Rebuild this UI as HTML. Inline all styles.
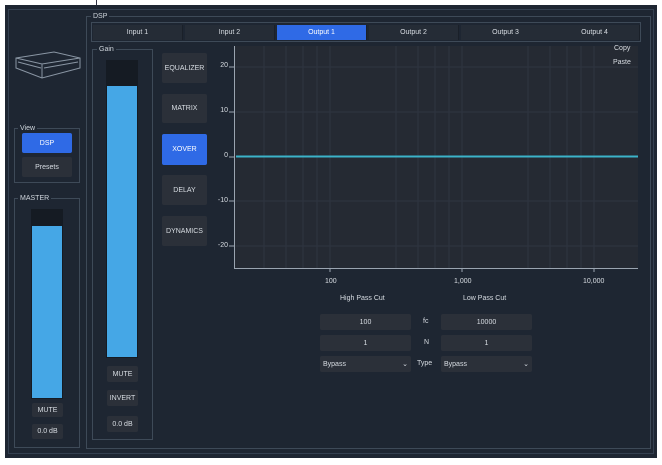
<!DOCTYPE html><html><head><style>
*{margin:0;padding:0;box-sizing:border-box}
body{width:662px;height:465px;background:#fff;position:relative;overflow:hidden;font-family:"Liberation Sans",sans-serif;font-size:8px;color:#d8dde3}
.a{position:absolute}
.box{position:absolute;border:1px solid #3e4a58}
.lbl{position:absolute;background:#1e2632;padding:0 2px;font-size:7px;color:#cfd5dc;top:-5px;left:6px;line-height:9px}
.btn{position:absolute;background:#2b3039;display:flex;align-items:center;justify-content:center;font-size:7px;color:#d8dde3;border-radius:2px}
.blue{background:#2f6ae6;color:#fff}
.tab{position:absolute;top:25px;height:15px;width:90px;background:#252c36;display:flex;align-items:center;justify-content:center;font-size:7px;border-right:1px solid #1a2029}
.tab.blue{background:#2f6ae6;color:#fff}
.yl{position:absolute;left:210px;width:18px;text-align:right;font-size:7px}
.xl{position:absolute;top:278px;font-size:7px}
</style></head><body>
<div class="a" style="left:5px;top:5px;width:652px;height:453px;background:#1e2632"></div>
<div class="a" style="left:96px;top:0;width:1px;height:5px;background:#334"></div>
<div class="box" style="left:8px;top:9px;width:646px;height:445px;border-color:#344050"></div>
<div class="box" style="left:86px;top:16px;width:565px;height:433px"><span class="lbl" style="left:4px">DSP</span></div>
<div class="box" style="left:91px;top:22px;width:550px;height:20px"></div>
<div class="tab" style="left:93px">Input 1</div>
<div class="tab" style="left:185px">Input 2</div>
<div class="tab blue" style="left:277px">Output 1</div>
<div class="tab" style="left:369px">Output 2</div>
<div class="tab" style="left:461px">Output 3</div>
<div class="tab" style="left:550px">Output 4</div>
<svg class="a" style="left:14px;top:48px" width="68" height="34"><g fill="none" stroke="#8a96a4" stroke-width="1"><path d="M2 10 L40 4 L66 10 L66 20 L28 30 L2 20 Z"/><path d="M2 10 L28 16 L66 10 M28 16 L28 30"/><path d="M4 14 L27 20 M30 20 L64 14"/></g></svg>
<div class="box" style="left:14px;top:128px;width:66px;height:55px"><span class="lbl" style="left:3px">View</span></div>
<div class="btn blue" style="left:22px;top:133px;width:50px;height:20px">DSP</div>
<div class="btn" style="left:22px;top:157px;width:50px;height:20px">Presets</div>
<div class="box" style="left:14px;top:198px;width:66px;height:250px"><span class="lbl" style="left:3px">MASTER</span></div>
<div class="a" style="left:31px;top:209px;width:32px;height:190px;background:#151b23"></div>
<div class="a" style="left:32px;top:226px;width:30px;height:172px;background:#45a7e6"></div>
<div class="btn" style="left:32px;top:403px;width:31px;height:14px">MUTE</div>
<div class="btn" style="left:32px;top:424px;width:31px;height:15px">0.0 dB</div>
<div class="box" style="left:92px;top:49px;width:61px;height:391px"><span class="lbl" style="left:4px">Gain</span></div>
<div class="a" style="left:106px;top:60px;width:32px;height:298px;background:#151b23"></div>
<div class="a" style="left:107px;top:86px;width:30px;height:271px;background:#45a7e6"></div>
<div class="btn" style="left:107px;top:366px;width:31px;height:16px">MUTE</div>
<div class="btn" style="left:107px;top:390px;width:31px;height:16px">INVERT</div>
<div class="btn" style="left:107px;top:416px;width:31px;height:16px">0.0 dB</div>
<div class="btn" style="left:162px;top:53px;width:45px;height:30px">EQUALIZER</div>
<div class="btn" style="left:162px;top:94px;width:45px;height:29px">MATRIX</div>
<div class="btn blue" style="left:162px;top:134px;width:45px;height:31px">XOVER</div>
<div class="btn" style="left:162px;top:175px;width:45px;height:30px">DELAY</div>
<div class="btn" style="left:162px;top:216px;width:45px;height:30px">DYNAMICS</div>
<svg class="a" style="left:228px;top:46px" width="412" height="226">
<rect x="7" y="0" width="403" height="222" fill="#252a33"/>
<g stroke="#2f3540" stroke-width="1">
<line x1="7.5" y1="21" x2="410" y2="21"/><line x1="7.5" y1="66" x2="410" y2="66"/><line x1="7.5" y1="155" x2="410" y2="155"/><line x1="7.5" y1="200" x2="410" y2="200"/>
<line x1="36" y1="0" x2="36" y2="222"/><line x1="58" y1="0" x2="58" y2="222"/><line x1="75" y1="0" x2="75" y2="222"/><line x1="89" y1="0" x2="89" y2="222"/><line x1="102" y1="0" x2="102" y2="222"/>
<line x1="168" y1="0" x2="168" y2="222"/><line x1="190" y1="0" x2="190" y2="222"/><line x1="207" y1="0" x2="207" y2="222"/><line x1="221" y1="0" x2="221" y2="222"/><line x1="234" y1="0" x2="234" y2="222"/>
<line x1="300" y1="0" x2="300" y2="222"/><line x1="322" y1="0" x2="322" y2="222"/><line x1="339" y1="0" x2="339" y2="222"/><line x1="353" y1="0" x2="353" y2="222"/><line x1="366" y1="0" x2="366" y2="222"/>
</g>
<g stroke="#9aa4b0" stroke-width="1"><line x1="6.5" y1="0" x2="6.5" y2="222"/><line x1="6" y1="222.5" x2="410" y2="222.5"/>
<line x1="1" y1="21" x2="6" y2="21"/><line x1="1" y1="66" x2="6" y2="66"/><line x1="1" y1="111" x2="6" y2="111"/><line x1="1" y1="155" x2="6" y2="155"/><line x1="1" y1="200" x2="6" y2="200"/>
<line x1="102" y1="222" x2="102" y2="227"/><line x1="234" y1="222" x2="234" y2="227"/><line x1="366" y1="222" x2="366" y2="227"/></g>
<line x1="8" y1="110.5" x2="410" y2="110.5" stroke="#3bb3c9" stroke-width="2"/>
</svg>
<div class="yl" style="top:62px">20</div><div class="yl" style="top:107px">10</div><div class="yl" style="top:152px">0</div><div class="yl" style="top:197px">-10</div><div class="yl" style="top:242px">-20</div>
<div class="xl" style="left:325px">100</div><div class="xl" style="left:454px">1,000</div><div class="xl" style="left:583px">10,000</div>
<div class="a" style="left:614px;top:45px;font-size:7px">Copy</div>
<div class="a" style="left:613px;top:59px;font-size:7px">Paste</div>
<div class="a" style="left:340px;top:295px;font-size:7px">High Pass Cut</div>
<div class="a" style="left:463px;top:295px;font-size:7px">Low Pass Cut</div>
<div class="btn" style="left:320px;top:314px;width:91px;height:16px">100</div>
<div class="btn" style="left:441px;top:314px;width:91px;height:16px">10000</div>
<div class="btn" style="left:320px;top:335px;width:91px;height:16px">1</div>
<div class="btn" style="left:441px;top:335px;width:91px;height:16px">1</div>
<div class="btn" style="left:320px;top:356px;width:91px;height:16px;justify-content:space-between;padding:0 3px"><span>Bypass</span><span>&#8964;</span></div>
<div class="btn" style="left:441px;top:356px;width:91px;height:16px;justify-content:space-between;padding:0 3px"><span>Bypass</span><span>&#8964;</span></div>
<div class="a" style="left:423px;top:318px;font-size:7px">fc</div>
<div class="a" style="left:424px;top:339px;font-size:7px">N</div>
<div class="a" style="left:417px;top:360px;font-size:7px">Type</div>
</body></html>
